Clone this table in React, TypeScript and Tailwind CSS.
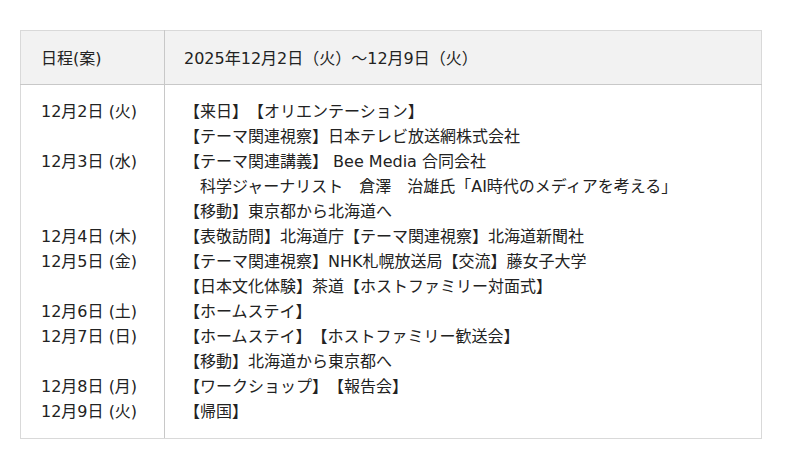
const rows: { date: string; lines: string[] }[] = [
  { date: "12月2日 (火)", lines: ["【来日】【オリエンテーション】", "【テーマ関連視察】日本テレビ放送網株式会社"] },
  {
    date: "12月3日 (水)",
    lines: [
      "【テーマ関連講義】 Bee Media 合同会社",
      "　科学ジャーナリスト　倉澤　治雄氏「AI時代のメディアを考える」",
      "【移動】東京都から北海道へ",
    ],
  },
  { date: "12月4日 (木)", lines: ["【表敬訪問】北海道庁【テーマ関連視察】北海道新聞社"] },
  { date: "12月5日 (金)", lines: ["【テーマ関連視察】NHK札幌放送局【交流】藤女子大学", "【日本文化体験】茶道【ホストファミリー対面式】"] },
  { date: "12月6日 (土)", lines: ["【ホームステイ】"] },
  { date: "12月7日 (日)", lines: ["【ホームステイ】【ホストファミリー歓送会】", "【移動】北海道から東京都へ"] },
  { date: "12月8日 (月)", lines: ["【ワークショップ】【報告会】"] },
  { date: "12月9日 (火)", lines: ["【帰国】"] },
];

export default function App() {
  return (
    <div className="w-[800px] h-[469px] bg-white pt-[30px] pl-[20px] font-['DejaVu_Sans','Noto_Sans_CJK_JP',sans-serif] text-[16px] leading-[25px] text-[#222] [text-spacing-trim:space-all]">
      <table className="w-[742px] border-collapse">
        <thead>
          <tr className="bg-[#f2f2f2]">
            <th className="w-[144px] border border-[#d9d9d9] border-b-[#c8c8c8] border-r-[#c8c8c8] pl-[20px] pt-[15px] pb-[13px] text-left font-normal">
              日程(案)
            </th>
            <th className="border border-[#d9d9d9] border-b-[#c8c8c8] pl-[19px] pt-[15px] pb-[13px] text-left font-normal">
              2025年12月2日（火）～12月9日（火）
            </th>
          </tr>
        </thead>
        <tbody>
          <tr>
            <td className="border border-[#d9d9d9] border-r-[#c8c8c8] pl-[20px] pt-[14px] pb-[14px] align-top">
              {rows.map((r) => (
                <div key={r.date}>
                  <div>{r.date}</div>
                  {r.lines.slice(1).map((_, i) => (
                    <div key={i}>&nbsp;</div>
                  ))}
                </div>
              ))}
            </td>
            <td className="border border-[#d9d9d9] pl-[19px] pt-[14px] pb-[14px] align-top whitespace-pre">
              {rows.map((r) => (
                <div key={r.date}>
                  {r.lines.map((l, i) => (
                    <div key={i}>{l}</div>
                  ))}
                </div>
              ))}
            </td>
          </tr>
        </tbody>
      </table>
    </div>
  );
}
